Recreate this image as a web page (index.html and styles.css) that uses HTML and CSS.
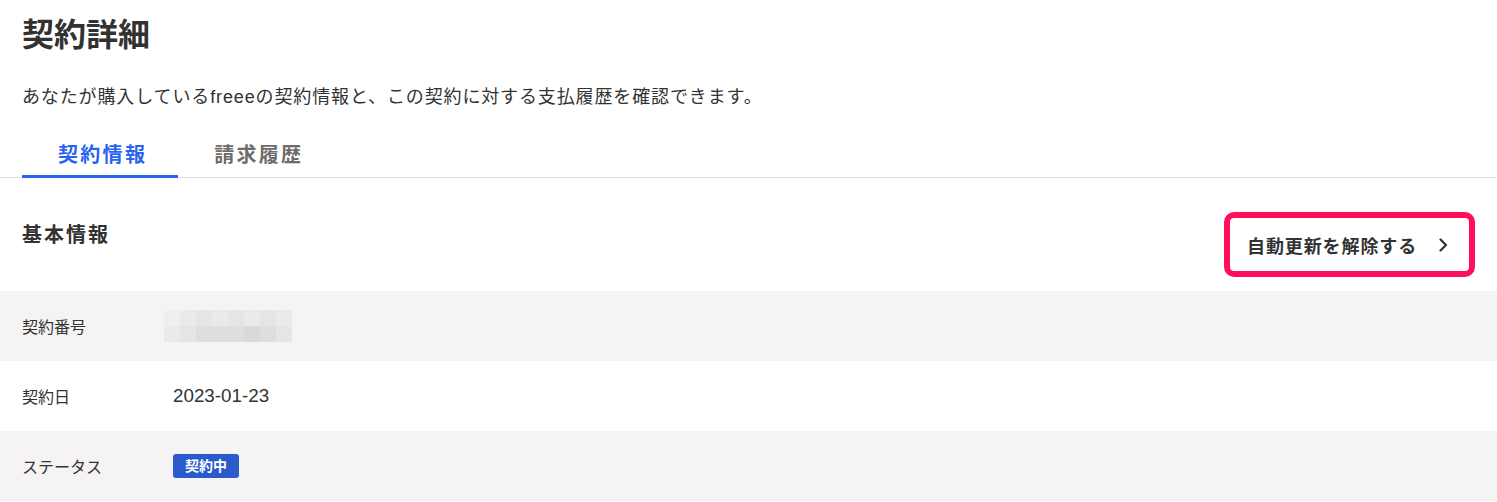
FILE: index.html
```html
<!DOCTYPE html>
<html lang="ja">
<head>
<meta charset="utf-8">
<title>契約詳細</title>
<link rel="stylesheet" href="styles.css">
</head>
<body>
<div class="page">
  <header class="page-head">
    <h1 class="title">契約詳細</h1>
    <p class="lead">あなたが購入しているfreeeの契約情報と、この契約に対する支払履歴を確認できます。</p>
  </header>
  <nav class="tabs">
    <a class="tab tab-active">契約情報</a>
    <a class="tab">請求履歴</a>
  </nav>
  <section class="section">
    <div class="section-head">
      <h2 class="section-title">基本情報</h2>
      <a class="cancel-btn">
        <span class="cancel-label">自動更新を解除する</span>
        <svg class="chev" width="10" height="14" viewBox="0 0 10 14" aria-hidden="true"><polyline points="2.5,1.5 8,7 2.5,12.5" fill="none" stroke="#323232" stroke-width="2.2" stroke-linecap="round" stroke-linejoin="round"/></svg>
      </a>
    </div>
    <div class="rows">
      <div class="row row-alt">
        <div class="row-label">契約番号</div>
        <div class="row-value">
          <div class="mosaic">
            <span class="m1"></span><span class="m2"></span><span class="m3"></span><span class="m2"></span><span class="m3"></span><span class="m2"></span><span class="m3"></span><span class="m2"></span>
            <span class="m2"></span><span class="m3"></span><span class="m4"></span><span class="m4"></span><span class="m4"></span><span class="m5"></span><span class="m4"></span><span class="m3"></span>
          </div>
        </div>
      </div>
      <div class="row">
        <div class="row-label">契約日</div>
        <div class="row-value date">2023-01-23</div>
      </div>
      <div class="row row-alt">
        <div class="row-label">ステータス</div>
        <div class="row-value"><span class="badge">契約中</span></div>
      </div>
    </div>
  </section>
</div>
</body>
</html>
```

FILE: styles.css
```css
* { box-sizing: border-box; }
html, body { margin: 0; padding: 0; background: #fff; }
body {
  font-family: "Liberation Sans", "Noto Sans CJK JP", sans-serif;
  color: #323232;
}
.page-head { padding: 0 22px; }
.title {
  margin: 0;
  padding-top: 11px;
  font-size: 32px;
  line-height: 48px;
  font-weight: 700;
  color: #323232;
}
.lead {
  margin: 25px 0 0;
  font-size: 18px;
  line-height: 27px;
  letter-spacing: 0.87px;
  color: #323232;
}
.tabs {
  display: flex;
  margin-top: 17px;
  padding: 0 22px;
  border-bottom: 1px solid #e3e1e1;
}
.tab {
  display: block;
  padding: 12px 31px 5px 36px;
  font-size: 20px;
  line-height: 30px;
  font-weight: 700;
  color: #6e6b6b;
  letter-spacing: 2.3px;
  border-bottom: 3px solid transparent;
  margin-bottom: -1px;
}
.tab-active {
  color: #2864f0;
  border-bottom-color: #2864f0;
}
.section-head {
  display: flex;
  justify-content: space-between;
  align-items: flex-start;
  padding: 34px 22px 14px;
}
.section-title {
  margin: 8px 0 0;
  font-size: 20px;
  line-height: 30px;
  font-weight: 700;
  letter-spacing: 2px;
  color: #323232;
}
.cancel-btn {
  display: flex;
  align-items: center;
  width: 251px;
  height: 65px;
  padding: 0 21px 0 17px;
  border: 6px solid #ff0f5a;
  border-radius: 10px;
  font-size: 18px;
  font-weight: 700;
  letter-spacing: 0.9px;
  color: #323232;
}
.cancel-label { flex: 1; }
.chev { display: block; }
.row {
  display: flex;
  align-items: center;
  height: 70px;
  padding: 0 22px;
}
.row-alt { background: #f5f3f3; }
.row-label {
  width: 151px;
  font-size: 16px;
  color: #323232;
}
.row-value { font-size: 18px; color: #323232; }
.date { font-size: 18.8px; }
.mosaic {
  display: grid;
  grid-template-columns: repeat(8, 16px);
  grid-template-rows: repeat(2, 16px);
  margin-left: -9px;
}
.mosaic span { display: block; }
.m1 { background: #f0eeee; }
.m2 { background: #ebe9e9; }
.m3 { background: #e6e4e4; }
.m4 { background: #dfdddd; }
.m5 { background: #dad8d8; }
.badge {
  display: inline-block;
  width: 66px;
  height: 24px;
  line-height: 24px;
  text-align: center;
  background: #2a5bcc;
  color: #fff;
  font-size: 14px;
  font-weight: 700;
  border-radius: 3px;
  vertical-align: middle;
}
```
